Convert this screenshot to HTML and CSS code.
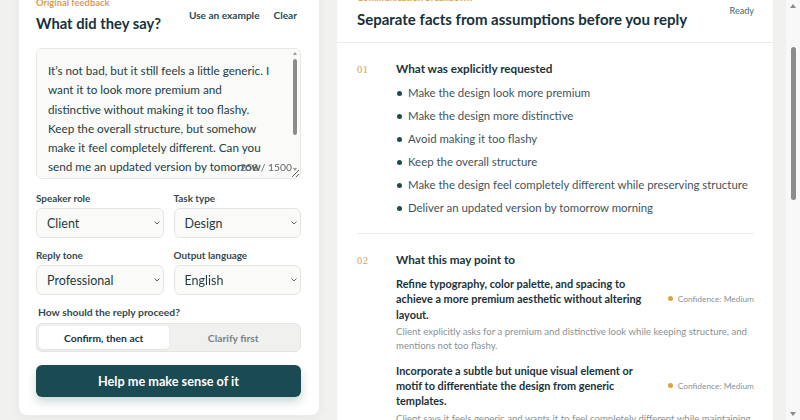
FILE: index.html
```html
<!DOCTYPE html>
<html lang="en">
<head>
<meta charset="utf-8">
<title>Feedback decoder</title>
<link rel="stylesheet" href="styles.css">
</head>
<body>
<div class="page" id="page">
  <main class="layout">
    <section class="card input-card">
      <div class="card-head">
        <div>
          <p class="eyebrow">Original feedback</p>
          <h1 class="card-title">What did they say?</h1>
        </div>
        <div class="head-actions">
          <button class="link-btn" type="button">Use an example</button>
          <button class="link-btn" type="button">Clear</button>
        </div>
      </div>

      <div class="feedback-box">
        <textarea class="feedback" spellcheck="false">It’s not bad, but it still feels a little generic. I want it to look more premium and distinctive without making it too flashy. Keep the overall structure, but somehow make it feel completely different. Can you send me an updated version by tomorrow morning?</textarea>
        <div class="mini-scroll" aria-hidden="true">
          <span class="arrow arrow-up"></span>
          <span class="mini-thumb"></span>
          <span class="arrow arrow-down"></span>
        </div>
        <span class="counter">258 / 1500</span>
      </div>

      <div class="fields">
        <label class="field">
          <span class="field-label">Speaker role</span>
          <span class="select-wrap">
            <select class="select"><option>Client</option><option>Manager</option><option>Teammate</option></select>
            <svg class="chev" viewBox="0 0 6 4" aria-hidden="true"><path d="M0.5 0.5 3 3 5.5 0.5"/></svg>
          </span>
        </label>
        <label class="field">
          <span class="field-label">Task type</span>
          <span class="select-wrap">
            <select class="select"><option>Design</option><option>Writing</option><option>Code</option></select>
            <svg class="chev" viewBox="0 0 6 4" aria-hidden="true"><path d="M0.5 0.5 3 3 5.5 0.5"/></svg>
          </span>
        </label>
        <label class="field">
          <span class="field-label">Reply tone</span>
          <span class="select-wrap">
            <select class="select"><option>Professional</option><option>Friendly</option><option>Direct</option></select>
            <svg class="chev" viewBox="0 0 6 4" aria-hidden="true"><path d="M0.5 0.5 3 3 5.5 0.5"/></svg>
          </span>
        </label>
        <label class="field">
          <span class="field-label">Output language</span>
          <span class="select-wrap">
            <select class="select"><option>English</option><option>中文</option></select>
            <svg class="chev" viewBox="0 0 6 4" aria-hidden="true"><path d="M0.5 0.5 3 3 5.5 0.5"/></svg>
          </span>
        </label>
      </div>

      <p class="question">How should the reply proceed?</p>
      <div class="segmented">
        <button class="seg is-active" type="button">Confirm, then act</button>
        <button class="seg" type="button">Clarify first</button>
      </div>

      <button class="primary" type="button">Help me make sense of it</button>
    </section>

    <section class="card result">
      <header class="result-head">
        <div>
          <p class="eyebrow">Communication breakdown</p>
          <h2 class="result-title">Separate facts from assumptions before you reply</h2>
        </div>
        <span class="status">Ready</span>
      </header>

      <div class="block">
        <span class="num">01</span>
        <div class="block-body">
          <h3 class="block-title">What was explicitly requested</h3>
          <ul class="facts">
            <li>Make the design look more premium</li>
            <li>Make the design more distinctive</li>
            <li>Avoid making it too flashy</li>
            <li>Keep the overall structure</li>
            <li>Make the design feel completely different while preserving structure</li>
            <li>Deliver an updated version by tomorrow morning</li>
          </ul>
        </div>
      </div>

      <div class="block">
        <span class="num">02</span>
        <div class="block-body">
          <h3 class="block-title">What this may point to</h3>
          <div class="guesses">
            <div class="guess">
              <p class="guess-title">Refine typography, color palette, and spacing to achieve a more premium aesthetic without altering layout.</p>
              <span class="confidence">Confidence: Medium</span>
              <p class="guess-note">Client explicitly asks for a premium and distinctive look while keeping structure, and mentions not too flashy.</p>
            </div>
            <div class="guess">
              <p class="guess-title">Incorporate a subtle but unique visual element or motif to differentiate the design from generic templates.</p>
              <span class="confidence">Confidence: Medium</span>
              <p class="guess-note">Client says it feels generic and wants it to feel completely different while maintaining structure.</p>
            </div>
            <div class="guess">
              <p class="guess-title">Swap stock-looking imagery and icons for a more curated, consistent visual set.</p>
              <span class="confidence">Confidence: Low</span>
              <p class="guess-note">“Generic” often refers to default assets, though the client does not name them directly.</p>
            </div>
          </div>
        </div>
      </div>

      <div class="block">
        <span class="num">03</span>
        <div class="block-body">
          <h3 class="block-title">What is still unclear</h3>
          <ul class="facts">
            <li>Which parts feel generic to the client</li>
            <li>How far “completely different” may go</li>
            <li>What time tomorrow morning counts as on time</li>
          </ul>
        </div>
      </div>

      <div class="block">
        <span class="num">04</span>
        <div class="block-body">
          <h3 class="block-title">Suggested reply</h3>
          <p class="reply">Thanks for the notes! Before I start, I'd like to confirm the direction: I'll keep the layout as it is and focus on typography, colour and spacing to give it a more premium, distinctive feel without making it flashy. I'll send the updated version by 10am tomorrow — does that work for you?</p>
        </div>
      </div>
    </section>
  </main>
</div>

<div class="page-scroll" aria-hidden="true">
  <span class="arrow arrow-up"></span>
  <span class="page-thumb"></span>
  <span class="arrow arrow-down"></span>
</div>

<script src="script.js"></script>
</body>
</html>
```

FILE: styles.css
```css
* { box-sizing: border-box; }

html, body {
  margin: 0;
  height: 100%;
  overflow: hidden;
}

body {
  background: #f1f1ef;
  color: #1b3238;
  font-family: "Lato", "Noto Sans CJK SC", sans-serif;
}

p, h1, h2, h3, ul { margin: 0; }

button, select, textarea {
  font: inherit;
}

/* scroll area */
.page {
  height: 100vh;
  overflow-y: scroll;
  scrollbar-width: none;
}

.layout {
  display: grid;
  grid-template-columns: 302px 1fr;
  gap: 17px;
  align-items: start;
  padding: 64px 27px 40px 18px;
}

/* drawn scrollbars */
.page-scroll {
  position: fixed;
  top: 0;
  right: 0;
  bottom: 0;
  width: 14px;
  background: #f8f8f8;
}

.page-thumb {
  position: absolute;
  top: 47px;
  left: 5px;
  width: 5px;
  height: 153px;
  border-radius: 3px;
  background: #8c8c8c;
}

.arrow {
  position: absolute;
  left: 50%;
  width: 0;
  height: 0;
  border-left: 3px solid transparent;
  border-right: 3px solid transparent;
  transform: translateX(-50%);
}

.arrow-up { top: 4px; border-bottom: 4px solid #8a8a8a; }
.arrow-down { bottom: 4px; border-top: 4px solid #8a8a8a; }

.card {
  background: #fff;
  border-radius: 9px;
}

/* ---------- input card ---------- */
.input-card {
  padding: 19px 18px 18px 17px;
  border: 1px solid #ececea;
  box-shadow: 0 2px 10px rgba(30, 50, 55, 0.05);
}

.card-head {
  display: flex;
  align-items: center;
  justify-content: space-between;
}

.eyebrow {
  color: #d6a24b;
  font-size: 9.4px;
  font-weight: 700;
  line-height: 14px;
}

.card-title {
  margin-top: 2px;
  font-size: 14.75px;
  font-weight: 700;
  line-height: 22px;
  color: #16313a;
}

.head-actions {
  display: flex;
  gap: 14px;
  margin-right: 4px;
}

.link-btn {
  padding: 0;
  border: 0;
  background: none;
  color: #1f4c55;
  font-size: 10.1px;
  font-weight: 700;
  line-height: 14px;
  cursor: pointer;
}

.feedback-box {
  position: relative;
  margin-top: 14px;
}

.feedback {
  display: block;
  width: 100%;
  height: 131px;
  padding: 12px 28px 4px 11px;
  border: 1px solid #e7e7e3;
  border-radius: 6px;
  background: #fafaf8;
  color: #243d43;
  font-size: 11.7px;
  line-height: 19.3px;
  resize: vertical;
  outline: none;
  scrollbar-width: none;
}

.mini-scroll {
  position: absolute;
  top: 1px;
  right: 2px;
  width: 8px;
  height: 122px;
}

.mini-scroll .arrow {
  border-left-width: 2.5px;
  border-right-width: 2.5px;
}

.mini-scroll .arrow-up { top: 3px; border-bottom-width: 3px; border-bottom-color: #9a9a9a; }
.mini-scroll .arrow-down { bottom: 0; border-top-width: 3px; border-top-color: #9a9a9a; }

.mini-thumb {
  position: absolute;
  top: 10px;
  left: 2px;
  width: 4px;
  height: 76px;
  border-radius: 2px;
  background: #8c8c8c;
}

.counter {
  position: absolute;
  right: 9px;
  bottom: 5px;
  color: #5f6668;
  font-size: 10.3px;
  line-height: 14px;
}

.fields {
  display: grid;
  grid-template-columns: 1fr 1fr;
  column-gap: 10px;
  row-gap: 10px;
  margin-top: 12px;
}

.field {
  display: flex;
  flex-direction: column;
  gap: 3px;
}

.field-label {
  color: #34494e;
  font-size: 9.9px;
  font-weight: 700;
  line-height: 14px;
}

.select-wrap {
  position: relative;
  display: block;
}

.select {
  display: block;
  width: 100%;
  height: 30px;
  padding: 0 14px 0 10px;
  border: 1px solid #e4e4e0;
  border-radius: 6px;
  background: #fafaf8;
  color: #1f3a40;
  font-size: 12.5px;
  appearance: none;
  -webkit-appearance: none;
  outline: none;
}

.chev {
  position: absolute;
  right: 4px;
  top: 13px;
  width: 6px;
  height: 4px;
  fill: none;
  stroke: #5b6467;
  stroke-width: 1;
  pointer-events: none;
}

.question {
  margin-top: 10px;
  padding-left: 2px;
  color: #34494e;
  font-size: 10.3px;
  font-weight: 700;
  line-height: 14px;
}

.segmented {
  display: grid;
  grid-template-columns: 1fr 1fr;
  margin-top: 4px;
  padding: 2px;
  border: 1px solid #e4e4e0;
  border-radius: 6px;
  background: #f0f0ee;
}

.seg {
  height: 23px;
  border: 0;
  border-radius: 4px;
  background: transparent;
  color: #7c8284;
  font-size: 10.3px;
  font-weight: 700;
}

.seg.is-active {
  background: #fff;
  color: #1b3238;
  box-shadow: 0 1px 2px rgba(0, 0, 0, 0.06);
}

.primary {
  display: block;
  width: 100%;
  height: 32px;
  margin-top: 13px;
  border: 0;
  border-radius: 6px;
  background: #1a4b53;
  color: #fff;
  font-size: 12.7px;
  font-weight: 700;
  box-shadow: 0 5px 10px rgba(26, 75, 83, 0.22);
}

/* ---------- result panel ---------- */
.result {
  padding-bottom: 20px;
}

.result-head {
  display: flex;
  align-items: center;
  justify-content: space-between;
  padding: 15px 19px 12px 20px;
  border-bottom: 1px solid #ececea;
}

.result-title {
  margin-top: 3px;
  font-size: 15px;
  font-weight: 700;
  line-height: 22px;
  color: #16313a;
}

.status {
  color: #3d6a70;
  font-size: 9.1px;
  line-height: 14px;
}

.block {
  display: grid;
  grid-template-columns: 39px 1fr;
  margin: 0 19px 0 20px;
  padding: 16px 0;
  border-bottom: 1px solid #ececea;
}

.block:last-child { border-bottom: 0; }

.num {
  padding-top: 2px;
  color: #d6a24b;
  font-family: "Liberation Serif", serif;
  font-size: 10.5px;
  line-height: 18px;
  letter-spacing: 0.5px;
}

.block-title {
  font-size: 11.7px;
  font-weight: 700;
  line-height: 18px;
  color: #1b3238;
}

.facts {
  margin-top: 7px;
  padding-left: 12px;
  list-style: none;
}

.facts li {
  position: relative;
  margin-bottom: 5px;
  color: #3f5459;
  font-size: 11.4px;
  line-height: 18px;
}

.facts li:last-child { margin-bottom: 0; }

.facts li::before {
  content: "";
  position: absolute;
  left: -11px;
  top: 7px;
  width: 5px;
  height: 5px;
  border-radius: 50%;
  background: #1f4a50;
}

.guesses {
  display: flex;
  flex-direction: column;
  gap: 10px;
  margin-top: 8px;
}

.guess {
  display: grid;
  grid-template-columns: 1fr auto;
  column-gap: 14px;
  align-items: center;
}

.guess-title {
  font-size: 10.9px;
  font-weight: 700;
  line-height: 15.3px;
  color: #1b3238;
}

.confidence {
  display: flex;
  align-items: center;
  gap: 5px;
  color: #8b9294;
  font-size: 8.4px;
  white-space: nowrap;
}

.confidence::before {
  content: "";
  width: 5px;
  height: 5px;
  border-radius: 50%;
  background: #d9a544;
}

.guess-note {
  grid-column: 1 / -1;
  margin-top: 3px;
  color: #8b9294;
  font-size: 9.6px;
  line-height: 14px;
}

.reply {
  margin-top: 8px;
  color: #3f5459;
  font-size: 11.4px;
  line-height: 19px;
}
```

FILE: script.js
```js
// Open the page part-way down, with the result panel in view.
document.getElementById('page').scrollTop = 88;
```
